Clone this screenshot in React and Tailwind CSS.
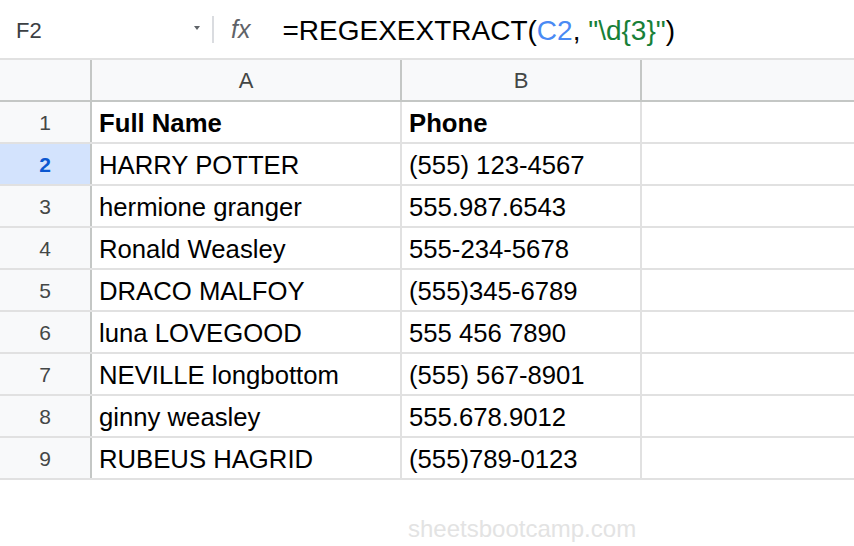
import React from 'react';

const rows = [
  ['HARRY POTTER', '(555) 123-4567'],
  ['hermione granger', '555.987.6543'],
  ['Ronald Weasley', '555-234-5678'],
  ['DRACO MALFOY', '(555)345-6789'],
  ['luna LOVEGOOD', '555 456 7890'],
  ['NEVILLE longbottom', '(555) 567-8901'],
  ['ginny weasley', '555.678.9012'],
  ['RUBEUS HAGRID', '(555)789-0123'],
];

const font = { fontFamily: '"Liberation Sans", Arial, sans-serif' };

function FormulaBar() {
  return (
    <div className="flex items-center h-[58px] bg-white">
      <div className="relative flex items-center w-[212px] h-full pl-4 pt-[2px]">
        <span className="text-[22px] text-[#3c4043]">F2</span>
        <span className="absolute left-[194px] top-[26px] w-0 h-0 border-l-[3px] border-r-[3px] border-t-[4px] border-l-transparent border-r-transparent border-t-[#5f6368]" />
      </div>
      <div className="w-[2px] h-[27px] bg-[#dadce0]" />
      <span className="ml-[17px] pt-[2px] text-[25px] italic text-[#5f6368]">fx</span>
      <span className="ml-[32px] pt-[3px] text-[28px] text-black whitespace-nowrap">
        =REGEXEXTRACT(<span className="text-[#4a8af4]">C2</span>, <span className="text-[#188038]">"\d{'{'}3{'}'}"</span>)
      </span>
    </div>
  );
}

export default function App() {
  return (
    <div className="w-[854px] h-[546px] bg-white overflow-hidden" style={font}>
      <FormulaBar />
      <div className="border-t-2 border-[#e1e1e1]">
        {/* column headers */}
        <div className="flex h-[42px] bg-[#f8f9fa] border-b-2 border-[#c4c7c5] text-[22px] text-[#444746]">
          <div className="w-[92px] border-r-2 border-[#c4c7c5]" />
          <div className="w-[310px] border-r-2 border-[#c4c7c5] flex items-center justify-center pt-[1px]">A</div>
          <div className="w-[240px] border-r-2 border-[#c4c7c5] flex items-center justify-center pt-[1px]">B</div>
          <div className="flex-1" />
        </div>

        {/* header row 1 */}
        <div className="flex h-[42px] border-b-2 border-[#e1e1e1]">
          <div className="w-[92px] bg-[#f8f9fa] border-r-2 border-[#c4c7c5] flex items-center justify-center pt-[1px] text-[21px] text-[#444746]">1</div>
          <div className="w-[310px] border-r-2 border-[#e1e1e1] flex items-center pl-[7px] pt-[2px] text-[25.7px] font-bold text-black">Full Name</div>
          <div className="w-[240px] border-r-2 border-[#e1e1e1] flex items-center pl-[7px] pt-[2px] text-[25.7px] font-bold text-black">Phone</div>
          <div className="flex-1" />
        </div>

        {rows.map(([name, phone], i) => {
          const active = i === 0;
          return (
            <div key={name} className="flex h-[42px] border-b-2 border-[#e1e1e1]">
              <div
                className={`w-[92px] border-r-2 border-[#c4c7c5] flex items-center justify-center pt-[1px] text-[21px] ${active ? 'bg-[#d3e3fd] text-[#0b57d0] font-bold' : 'bg-[#f8f9fa] text-[#444746]'}`}
              >
                {i + 2}
              </div>
              <div className="w-[310px] border-r-2 border-[#e1e1e1] flex items-center pl-[7px] pt-[2px] text-[25.7px] text-black whitespace-nowrap">{name}</div>
              <div className="w-[240px] border-r-2 border-[#e1e1e1] flex items-center pl-[7px] pt-[2px] text-[25.7px] text-black whitespace-nowrap">{phone}</div>
              <div className="flex-1" />
            </div>
          );
        })}
      </div>

      <div className="pl-[408px] mt-[35px] text-[24px] leading-[28px] text-[#e3e3e3]">sheetsbootcamp.com</div>
    </div>
  );
}
